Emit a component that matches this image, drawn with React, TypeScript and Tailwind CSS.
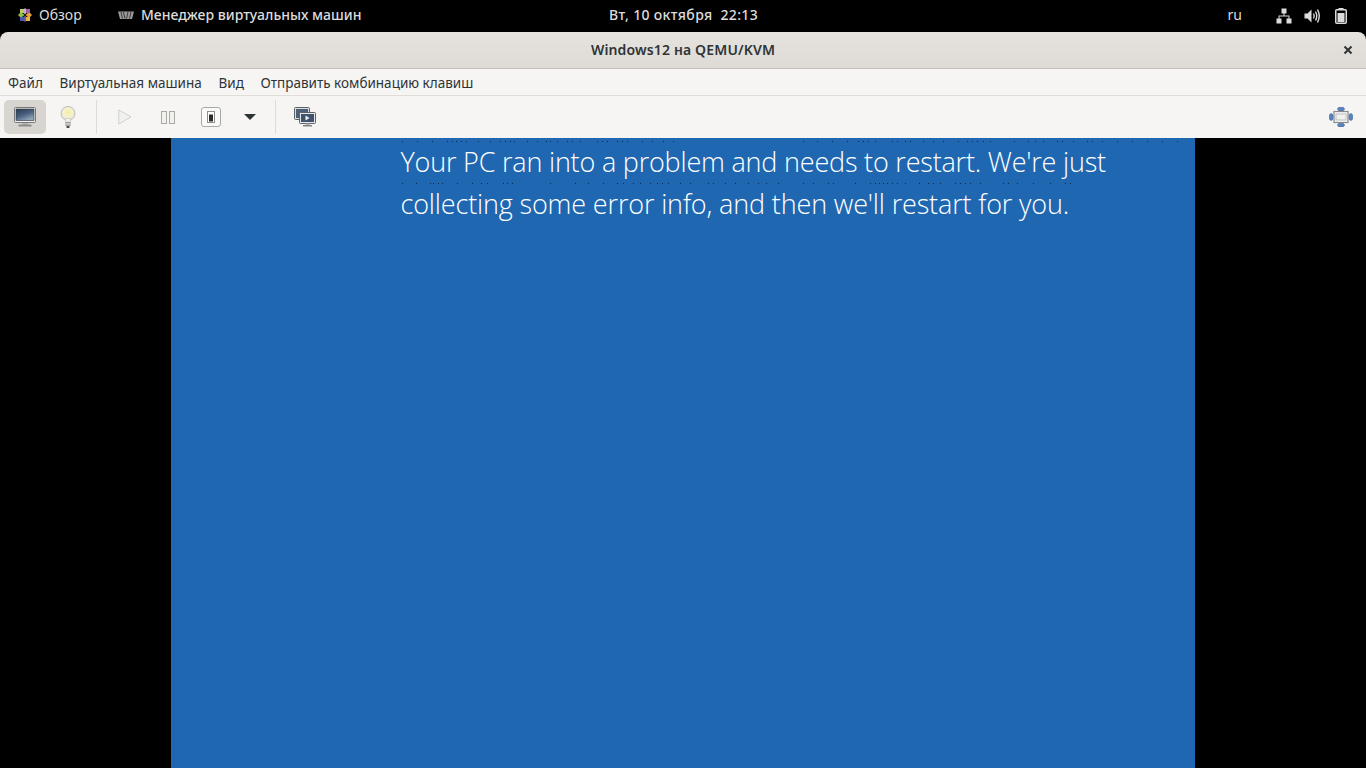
import React from 'react';

const MENU_ITEMS = ['Файл', 'Виртуальная машина', 'Вид', 'Отправить комбинацию клавиш'];

// pixel dots left over on the guest screen, as x offsets inside the blue area
const DOTS_TOP = [231,246,261,276,281,285,290,295,307,319,329,334,339,343,356,366,375,379,386,396,401,409,426,431,436,446,451,456,471,481,492,502,
  632,646,661,676,687,692,697,704,721,726,734,739,752,762,772,787,796,801,806,812,819,843,857,864,872,886,891,902,916,921,931,946,961,976,991,1006];
const DOTS_BOTTOM = [231,245,259,262,267,271,286,301,310,316,332,336,341,379,404,417,432,446,452,462,469,479,486,491,497,509,519,537,542,554,564,577,587,595,607,
  632,642,657,662,684,699,704,708,712,716,721,726,734,748,757,762,769,784,789,794,799,809,832,837,846,862,879,894,899];

function DotRow({ dots }: { dots: number[] }) {
  return (
    <svg width="1024" height="1" className="block">
      {dots.map((x) => (
        <rect key={x} x={x} y="0" width="1" height="1" fill="#0a2a4d" />
      ))}
    </svg>
  );
}

function FootIcon() {
  return (
    <svg width="16" height="16" viewBox="0 0 16 16">
      <path d="M8 1 L11 4 L8 7.5 L5 4 Z" fill="#c9a6d8" />
      <path d="M12 5 L15 8 L12 11 L8.5 8 Z" fill="#e8a33c" />
      <path d="M4 5 L7.5 8 L4 11 L1 8 Z" fill="#8fbf45" />
      <path d="M8 8.5 L11 12 L8 15 L5 12 Z" fill="#5a5fb0" />
      <rect x="9" y="2" width="4" height="4" fill="#a35d9c" />
      <rect x="3" y="2" width="4" height="4" fill="#b6cf5a" />
      <rect x="3" y="10" width="4" height="4" fill="#4f55a8" />
      <rect x="9" y="10" width="4" height="4" fill="#efb43f" />
    </svg>
  );
}

function VmmIcon() {
  return (
    <svg width="16" height="9" viewBox="0 0 16 9">
      <path d="M0 0.5 H16 L14 8 H2 Z" fill="#9a9a9a" />
      <path d="M3 1 L4.5 7.5 M5.5 1 L7 7.5 M10 1 L8.5 7.5 M13 1 L11.5 7.5" stroke="#3a3a3a" strokeWidth="1" />
    </svg>
  );
}

function NetworkIcon() {
  return (
    <svg width="16" height="16" viewBox="0 0 16 16" fill="#dcdcdc">
      <rect x="5.5" y="0.5" width="5" height="5" />
      <rect x="0.5" y="10.5" width="5" height="5" />
      <rect x="10.5" y="10.5" width="5" height="5" />
      <path d="M7.5 5 H8.5 V7.5 H13.5 V11 H12.5 V8.5 H3.5 V11 H2.5 V7.5 H7.5 Z" />
    </svg>
  );
}

function VolumeIcon() {
  return (
    <svg width="16" height="16" viewBox="0 0 16 16" fill="none">
      <path d="M0.5 5.5 H3.5 L7.5 1.5 V14.5 L3.5 10.5 H0.5 Z" fill="#dcdcdc" />
      <path d="M9.5 5.5 Q11 8 9.5 10.5" stroke="#dcdcdc" strokeWidth="1.4" />
      <path d="M11.5 3.5 Q14 8 11.5 12.5" stroke="#dcdcdc" strokeWidth="1.4" />
      <path d="M13.5 1.5 Q17 8 13.5 14.5" stroke="#dcdcdc" strokeWidth="1.4" />
    </svg>
  );
}

function BatteryIcon() {
  return (
    <svg width="12" height="16" viewBox="0 0 12 16" fill="none">
      <rect x="3.5" y="0" width="5" height="2" fill="#dcdcdc" />
      <rect x="0.75" y="1.75" width="10.5" height="13.5" rx="1" stroke="#dcdcdc" strokeWidth="1.5" />
      <rect x="2.5" y="5" width="7" height="9" fill="#dcdcdc" />
    </svg>
  );
}

function MonitorIcon() {
  return (
    <svg width="22" height="20" viewBox="0 0 22 20">
      <defs>
        <linearGradient id="scr" x1="0" y1="0" x2="0.6" y2="1">
          <stop offset="0" stopColor="#2b3a52" />
          <stop offset="0.55" stopColor="#46607f" />
          <stop offset="1" stopColor="#8ea3b8" />
        </linearGradient>
      </defs>
      <rect x="0.5" y="0.5" width="21" height="15" rx="1" fill="#eeeeee" stroke="#77787a" />
      <rect x="2" y="2" width="18" height="11.5" fill="url(#scr)" stroke="#30363d" strokeWidth="0.6" />
      <rect x="8" y="16" width="6" height="2" fill="#b5b5b5" />
      <rect x="4.5" y="17.5" width="13" height="2" rx="0.5" fill="#8b8b8b" />
    </svg>
  );
}

function BulbIcon() {
  return (
    <svg width="16" height="22" viewBox="0 0 16 22">
      <defs>
        <radialGradient id="glow" cx="0.5" cy="0.42" r="0.55">
          <stop offset="0" stopColor="#f7ea83" />
          <stop offset="0.38" stopColor="#f6f2c4" />
          <stop offset="1" stopColor="#e8e8e4" />
        </radialGradient>
      </defs>
      <circle cx="8" cy="7.5" r="7" fill="url(#glow)" stroke="#bdbdb8" />
      <path d="M5 12.5 L5.5 16 H10.5 L11 12.5 Z" fill="#f2f1e6" stroke="#c4c4be" strokeWidth="0.7" />
      <rect x="5" y="16" width="6" height="4" rx="1" fill="#a3a3a3" />
      <rect x="5" y="17.5" width="6" height="1" fill="#e6e6e6" />
      <rect x="6.5" y="20" width="3" height="2" fill="#4c4c4c" />
    </svg>
  );
}

function PlayIcon() {
  return (
    <svg width="14" height="16" viewBox="0 0 14 16">
      <path d="M0.75 1 L13 8 L0.75 15 Z" fill="#f1f1ee" stroke="#cfd0cc" strokeWidth="1" />
    </svg>
  );
}

function PauseIcon() {
  return (
    <svg width="14" height="13" viewBox="0 0 14 13">
      <rect x="0.5" y="0.5" width="5" height="12" fill="#f0f0ed" stroke="#a9aaa6" />
      <rect x="8.5" y="0.5" width="5" height="12" fill="#f0f0ed" stroke="#a9aaa6" />
    </svg>
  );
}

function PowerIcon() {
  return (
    <svg width="20" height="20" viewBox="0 0 20 20">
      <rect x="0.5" y="0.5" width="19" height="19" rx="2.5" fill="#fafafa" stroke="#a9a9a6" />
      <rect x="6.5" y="4.5" width="7" height="11" fill="#ffffff" stroke="#8f8f8c" />
      <rect x="8" y="7.5" width="4" height="7" fill="#2d2d2d" />
    </svg>
  );
}

function ScreensIcon() {
  return (
    <svg width="22" height="20" viewBox="0 0 22 20">
      <rect x="0.5" y="0.5" width="15" height="12" rx="1" fill="#d9dbdd" stroke="#5e6266" />
      <rect x="2" y="2" width="12" height="9" fill="#4e6078" />
      <rect x="5.5" y="5.5" width="16" height="11" rx="1" fill="#e6e7e8" stroke="#5e6266" />
      <rect x="7" y="7" width="13" height="8" fill="#3f536d" />
      <path d="M11.5 8.5 L15.5 11 L11.5 13.5 Z" fill="#f4f4f4" />
      <rect x="11.5" y="16.5" width="4" height="1.5" fill="#b0b0b0" />
      <rect x="9" y="18" width="9" height="1.5" fill="#858585" />
    </svg>
  );
}

function FullscreenIcon() {
  return (
    <svg width="24" height="20" viewBox="0 0 24 20">
      <ellipse cx="12" cy="2" rx="3.5" ry="2" fill="#5b83bd" stroke="#3f659f" strokeWidth="0.5" />
      <ellipse cx="12" cy="18" rx="3.5" ry="2" fill="#5b83bd" stroke="#3f659f" strokeWidth="0.5" />
      <ellipse cx="2.2" cy="10" rx="2" ry="3.5" fill="#5b83bd" stroke="#3f659f" strokeWidth="0.5" />
      <ellipse cx="21.8" cy="10" rx="2" ry="3.5" fill="#5b83bd" stroke="#3f659f" strokeWidth="0.5" />
      <rect x="5" y="4.5" width="14" height="11" fill="#f5f5f5" stroke="#8a8a8a" strokeWidth="1.2" />
      <rect x="7" y="7" width="10" height="6" fill="#f1f1f1" stroke="#b5b5b5" strokeWidth="0.8" />
    </svg>
  );
}

function ToolbarSep() {
  return <div className="w-px h-[34px] bg-[#dedcd8]" />;
}

export default function App() {
  return (
    <div className="h-[768px] w-[1366px] overflow-hidden bg-black flex flex-col font-['Noto_Sans',sans-serif]">
      {/* gnome top bar */}
      <div className="h-[32px] shrink-0 bg-black text-[#dcdcdc] text-[14px] leading-[30px] flex items-start relative">
        <div className="flex items-center ml-[17px] gap-[6px] w-[101px] h-[30px]">
          <FootIcon />
          <span>Обзор</span>
        </div>
        <div className="flex items-center gap-[7px] h-[30px]">
          <VmmIcon />
          <span className="font-medium">Менеджер виртуальных машин</span>
        </div>
        <span className="absolute left-[609px] top-0 font-medium whitespace-pre tracking-[0.35px]">Вт, 10 октября  22:13</span>
        <div className="ml-auto flex items-center h-[32px]">
          <span className="mr-[34px] mb-[2px]">ru</span>
          <div className="flex items-center mr-[19px]">
            <NetworkIcon />
            <span className="w-[12px]" />
            <VolumeIcon />
            <span className="w-[15px]" />
            <BatteryIcon />
          </div>
        </div>
      </div>

      {/* window */}
      <div className="h-[37px] shrink-0 rounded-t-[8px] bg-gradient-to-b from-[#e6e3df] to-[#dedbd6] border-b border-[#c5bfb8] flex items-center justify-center relative text-[14px] font-semibold tracking-[0.15px] text-[#2e3436] pb-[2px]">
        <span>Windows12 на QEMU/KVM</span>
        <svg width="10" height="10" viewBox="0 0 10 10" className="absolute left-[1343px] top-[13px]">
          <path d="M1.5 1.5 L8.5 8.5 M8.5 1.5 L1.5 8.5" stroke="#2e3436" strokeWidth="2" />
        </svg>
      </div>
      <div className="h-[27px] shrink-0 bg-[#f6f5f4] border-b border-[#e0ddd9] flex items-center pl-[8px] pt-[2px] gap-[16.7px] text-[13.5px] text-[#2e3436]">
        {MENU_ITEMS.map((item) => (
          <span key={item}>{item}</span>
        ))}
      </div>
      <div className="h-[42px] shrink-0 bg-[#f6f5f4] flex items-center pl-[4px] pr-[13px]">
        <div className="w-[42px] h-[34px] rounded-[5px] bg-[#d8d4cf] flex items-center justify-center">
          <MonitorIcon />
        </div>
        <div className="w-[44px] flex justify-center"><BulbIcon /></div>
        <div className="ml-[6px]"><ToolbarSep /></div>
        <div className="ml-[21px]"><PlayIcon /></div>
        <div className="ml-[29px]"><PauseIcon /></div>
        <div className="ml-[26px]"><PowerIcon /></div>
        <div className="ml-[23px] w-0 h-0 border-x-[6px] border-x-transparent border-t-[6px] border-t-[#2e3436]" />
        <div className="ml-[19px]"><ToolbarSep /></div>
        <div className="ml-[18px]"><ScreensIcon /></div>
        <div className="ml-auto"><FullscreenIcon /></div>
      </div>

      {/* guest screen */}
      <div className="flex-1 flex justify-center bg-black">
        <div className="w-[1024px] ml-[-1px] bg-[#2067b2] text-white font-['Open_Sans',sans-serif] font-light text-[27px] leading-[40px] whitespace-nowrap">
          <div className="pt-[3px]"><DotRow dots={DOTS_TOP} /></div>
          <p className="pl-[230px] pb-[1px] tracking-[-0.2px]">
            Your PC ran into a problem and needs to restart. We're just
          </p>
          <DotRow dots={DOTS_BOTTOM} />
          <p className="pl-[230px] tracking-[-0.15px]">
            collecting some error info, and then we'll restart for you.
          </p>
        </div>
      </div>
    </div>
  );
}
